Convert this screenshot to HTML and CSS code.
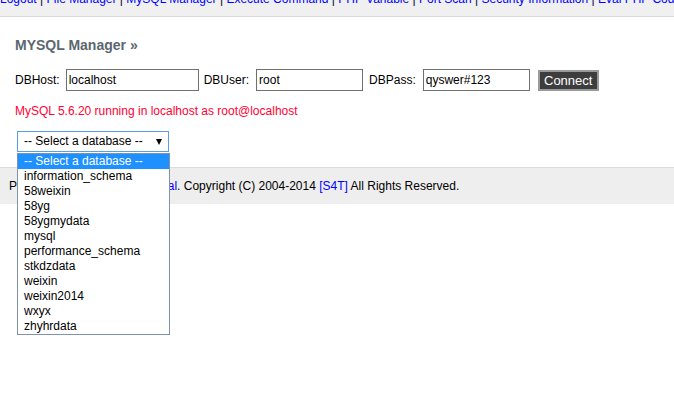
FILE: index.html
```html
<!DOCTYPE html>
<html>
<head>
<meta charset="utf-8">
<title>MYSQL Manager</title>
<link rel="stylesheet" href="styles.css">
</head>
<body>
<div class="nav">
  <div class="nav-links"><a href="#">Logout</a> | <a href="#">File Manager</a> | <a href="#">MySQL Manager</a> | <a href="#">Execute Command</a> | <a href="#">PHP Variable</a> | <a href="#">Port Scan</a> | <a href="#">Security Information</a> | <a href="#">Eval PHP Code</a> | <a href="#">Other</a></div>
</div>
<div class="main">
  <h2 class="title">MYSQL Manager &raquo;</h2>
  <form class="conn">
    <label class="lbl lbl-host">DBHost:</label><input class="input in-host" type="text" value="localhost">
    <label class="lbl lbl-user">DBUser:</label><input class="input in-user" type="text" value="root">
    <label class="lbl lbl-pass">DBPass:</label><input class="input in-pass" type="text" value="qyswer#123">
    <button class="bt" type="button">Connect</button>
  </form>
  <p class="msg">MySQL 5.6.20 running in localhost as root@localhost</p>
  <div class="db-select">
    <div class="select-box"><span>-- Select a database --</span><span class="arrow"></span></div>
    <ul class="select-list">
      <li class="opt opt-active">-- Select a database --</li>
      <li class="opt">information_schema</li>
      <li class="opt">58weixin</li>
      <li class="opt">58yg</li>
      <li class="opt">58ygmydata</li>
      <li class="opt">mysql</li>
      <li class="opt">performance_schema</li>
      <li class="opt">stkdzdata</li>
      <li class="opt">weixin</li>
      <li class="opt">weixin2014</li>
      <li class="opt">wxyx</li>
      <li class="opt">zhyhrdata</li>
    </ul>
  </div>
</div>
<div class="foot">Powered by <a href="#">PhpSpy 2014 Final</a>. Copyright (C) 2004-2014 <a href="#">[S4T]</a> All Rights Reserved.</div>
</body>
</html>
```
FILE: styles.css
```css
* { box-sizing: border-box; }
html { height: 100%; margin: 0; padding: 0; background: #fff; }
body {
  margin: 0;
  padding: 0;
  min-height: 412px;
  font: 12px/16px "Liberation Sans", Arial, sans-serif;
  color: #000;
}
a { color: #0000ff; text-decoration: none; }

.nav {
  height: 17px;
  background: #f0f0f0;
  border-bottom: 1px solid #d9d9d9;
  overflow: hidden;
}
.nav-links {
  margin-top: -9px;
  white-space: nowrap;
  color: #000033;
}

.main { padding: 16px 15px 0; }
.title {
  margin: 0;
  font-size: 14px;
  font-weight: bold;
  line-height: 24px;
  color: #5b686f;
}

.conn {
  margin: 12px 0 0;
  display: flex;
  align-items: center;
  height: 22px;
}
.lbl { white-space: nowrap; }
.lbl-user { margin-left: 5px; }
.lbl-pass { margin-left: 6px; }
.input {
  height: 22px;
  border: 1px solid #707070;
  padding: 2px;
  font: 12px "Liberation Sans", Arial, sans-serif;
  color: #000;
  background: #fff;
  outline: none;
}
.in-host { width: 133px; margin-left: 6px; }
.in-user { width: 107px; margin-left: 7px; }
.in-pass { width: 107px; margin-left: 7px; }
.bt {
  margin-left: 8px;
  width: 61px;
  height: 21px;
  padding: 0;
  background: #3d3d3d;
  color: #fff;
  border: 2px solid #9a9a9a;
  font: 13px "Liberation Sans", Arial, sans-serif;
}

.msg {
  margin: 12px 0 0;
  color: #ff0033;
}

.db-select {
  position: relative;
  z-index: 5;
  margin: 12px 0 0 2px;
  width: 153px;
}
.select-box {
  width: 152px;
  height: 21px;
  border: 1px solid #5b9de6;
  padding: 0 6px;
  line-height: 19px;
  display: flex;
  justify-content: space-between;
  align-items: center;
  background: #fff;
}
.arrow {
  width: 0;
  height: 0;
  border-left: 3px solid transparent;
  border-right: 3px solid transparent;
  border-top: 6px solid #000;
}
.select-list {
  position: absolute;
  top: 22px;
  left: 0;
  width: 153px;
  margin: 0;
  padding: 0;
  list-style: none;
  background: #fff;
  border: 1px solid #7f93ad;
}
.opt {
  height: 15px;
  line-height: 15px;
  padding-left: 6px;
  white-space: nowrap;
}
.opt-active { background: #1e90ff; color: #fff; }

.foot {
  margin-top: 15px;
  background: #eeeeee;
  border-top: 1px solid #dddddd;
  padding: 10px 9px 10px;
  white-space: nowrap;
}
```
